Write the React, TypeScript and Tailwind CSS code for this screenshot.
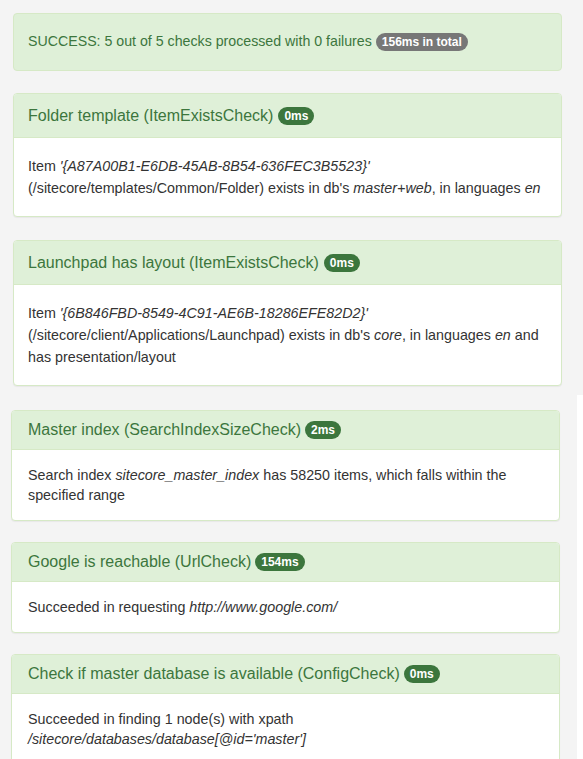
import React from 'react';

type Check = {
  title: string;
  ms: string;
  body: React.ReactNode;
};

const topChecks: Check[] = [
  {
    title: 'Folder template (ItemExistsCheck)',
    ms: '0ms',
    body: (
      <>
        Item <em>'{'{A87A00B1-E6DB-45AB-8B54-636FEC3B5523}'}'</em> (/sitecore/templates/Common/Folder) exists in db's{' '}
        <em>master+web</em>, in languages <em>en</em>
      </>
    ),
  },
  {
    title: 'Launchpad has layout (ItemExistsCheck)',
    ms: '0ms',
    body: (
      <>
        Item <em>'{'{6B846FBD-8549-4C91-AE6B-18286EFE82D2}'}'</em> (/sitecore/client/Applications/Launchpad) exists in db's{' '}
        <em>core</em>, in languages <em>en</em> and has presentation/layout
      </>
    ),
  },
];

const bottomChecks: Check[] = [
  {
    title: 'Master index (SearchIndexSizeCheck)',
    ms: '2ms',
    body: (
      <>
        Search index <em>sitecore_master_index</em> has 58250 items, which falls within the specified range
      </>
    ),
  },
  {
    title: 'Google is reachable (UrlCheck)',
    ms: '154ms',
    body: (
      <>
        Succeeded in requesting <em>http://www.google.com/</em>
      </>
    ),
  },
  {
    title: 'Check if master database is available (ConfigCheck)',
    ms: '0ms',
    body: (
      <>
        Succeeded in finding 1 node(s) with xpath <em>/sitecore/databases/database[@id='master']</em>
      </>
    ),
  },
];

function Badge({ children, gray }: { children: React.ReactNode; gray?: boolean }) {
  return (
    <span
      className={
        'inline-block rounded-full px-[6px] text-[12px] font-bold leading-[18px] text-white align-middle ' +
        (gray ? 'bg-[#777777]' : 'bg-[#3c763d]')
      }
    >
      {children}
    </span>
  );
}

// the top two panels are drawn a little larger
function BigPanel({ check }: { check: Check }) {
  return (
    <div className="rounded-[4px] border border-[#d6e9c6] bg-white shadow-[0_1px_1px_rgba(0,0,0,0.05)]">
      <div className="flex h-[44px] items-center gap-[5px] rounded-t-[3px] border-b border-[#d6e9c6] bg-[#dff0d8] px-[14px] text-[16px] text-[#3c763d]">
        <span>{check.title}</span>
        <Badge>{check.ms}</Badge>
      </div>
      <div className="px-[14px] pt-[17px] pb-[17px] text-[14.3px] leading-[22px] text-[#333333]">{check.body}</div>
    </div>
  );
}

function SmallPanel({ check }: { check: Check }) {
  return (
    <div className="rounded-[4px] border border-[#d6e9c6] bg-white shadow-[0_1px_1px_rgba(0,0,0,0.05)]">
      <div className="flex h-[39px] items-center gap-[4px] rounded-t-[3px] border-b border-[#d6e9c6] bg-[#dff0d8] px-[16px] text-[16px] text-[#3c763d]">
        <span>{check.title}</span>
        <Badge>{check.ms}</Badge>
      </div>
      <div className="px-[16px] pt-[15px] pb-[15px] text-[14.3px] leading-[20px] text-[#333333]">{check.body}</div>
    </div>
  );
}

export default function App() {
  return (
    <div className="min-h-[759px] bg-white font-['Liberation_Sans',Arial,sans-serif]">
      <div className="bg-[#f4f4f4] pt-[13px] pb-[9px] pl-[13px] pr-[21px]">
        <div className="flex h-[58px] items-center gap-[4px] rounded-[4px] border border-[#d6e9c6] bg-[#dff0d8] px-[14px] text-[14.2px] text-[#3c763d]">
          <span>SUCCESS: 5 out of 5 checks processed with 0 failures</span>
          <Badge gray>156ms in total</Badge>
        </div>
        <div className="mt-[22px] flex flex-col gap-[23px]">
          {topChecks.map((c) => (
            <BigPanel key={c.title} check={c} />
          ))}
        </div>
      </div>
      <div className="w-[577px] bg-[#f4f4f4] pl-[11px] pr-[17px] pt-[15px] pb-[20px]">
        <div className="flex flex-col gap-[21px]">
          {bottomChecks.map((c) => (
            <SmallPanel key={c.title} check={c} />
          ))}
        </div>
      </div>
    </div>
  );
}
